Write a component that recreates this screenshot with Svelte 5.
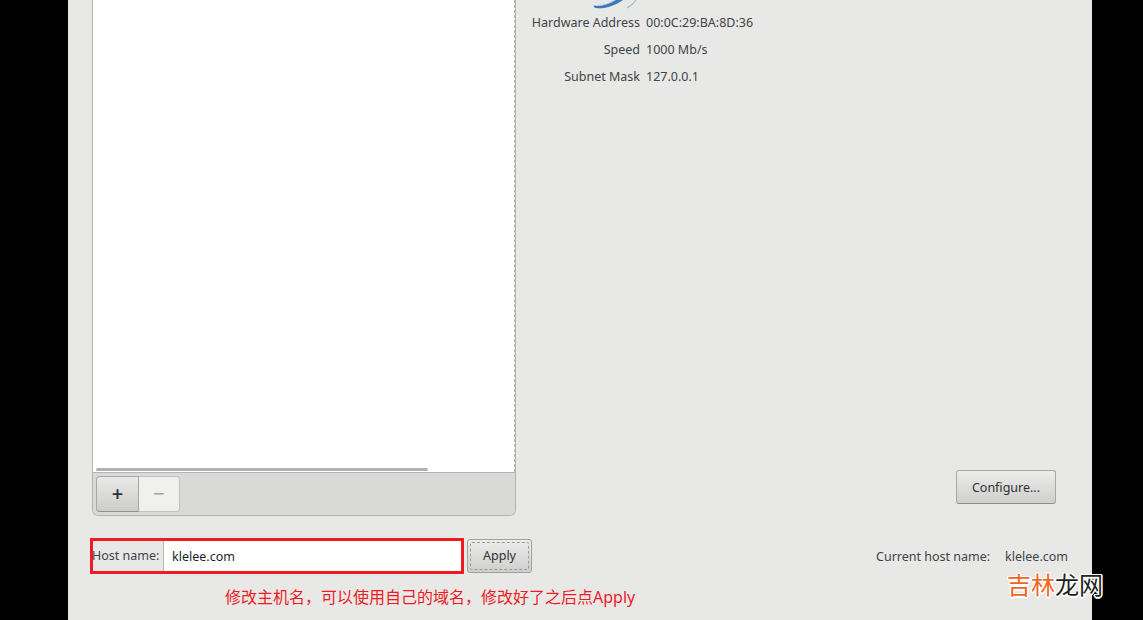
<script>
	const details = [
		{ label: 'Hardware Address', value: '00:0C:29:BA:8D:36' },
		{ label: 'Speed', value: '1000 Mb/s' },
		{ label: 'Subnet Mask', value: '127.0.0.1' },
	];
</script>

<div class="screen">
	<main class="window">
		<div class="top">
			<section class="device-list">
				<div class="list-body">
					<div class="scrollbar"></div>
				</div>
				<div class="toolbar">
					<div class="btn-group">
						<button class="add">+</button>
						<button class="remove">−</button>
					</div>
				</div>
			</section>

			<section class="device-info">
				<svg class="logo" width="50" height="9" viewBox="0 0 50 9">
					<path d="M2 5.5C8 7 16 4.5 24 0L31 0C23 6 11 9.5 4 8C2 7.5 1 6.5 2 5.5Z" fill="#3b78bb" />
					<path d="M6 5.5C12 5.5 18 3 22 0.5" fill="none" stroke="#a9c6e4" stroke-width="1" />
					<path d="M35 8C39 6 42 3 44 0" fill="none" stroke="#9db9d6" stroke-width="1.2" />
				</svg>
				<dl class="details">
					{#each details as row}
						<dt>{row.label}</dt>
						<dd>{row.value}</dd>
					{/each}
				</dl>
				<button class="configure">Configure...</button>
			</section>
		</div>

		<div class="host-row">
			<div class="host-box">
				<label for="hostname">Host name:</label>
				<input id="hostname" value="klelee.com" />
			</div>
			<button class="apply"><span>Apply</span></button>
			<div class="current">
				<span>Current host name:</span>
				<span>klelee.com</span>
			</div>
		</div>

		<p class="note">修改主机名，可以使用自己的域名，修改好了之后点Apply</p>
	</main>

	<div class="watermark"><span class="orange">吉林</span><span>龙网</span></div>
</div>

<style>
	:global(body) {
		margin: 0;
		background: #000;
	}

	.screen {
		position: relative;
		width: 1143px;
		height: 620px;
		overflow: hidden;
		background: #000;
		padding-left: 68px;
		box-sizing: border-box;
		font-family: "Noto Sans", "Noto Sans CJK SC", sans-serif;
		font-size: 12.5px;
		color: #2e3436;
	}

	.window {
		width: 1024px;
		height: 620px;
		background: #e8e8e7;
		box-sizing: border-box;
		padding-left: 24px;
		display: flex;
		flex-direction: column;
	}

	.top {
		display: flex;
		height: 516px;
	}

	.device-list {
		width: 424px;
		box-sizing: border-box;
		border: 1px solid #b4b4b1;
		border-top: 0;
		border-radius: 0 0 6px 6px;
		display: flex;
		flex-direction: column;
		overflow: hidden;
	}

	.list-body {
		flex: 1;
		background: #fff;
		display: flex;
		align-items: flex-end;
		padding: 0 0 1px 3px;
		border-right: 1px dashed #b4b4b1;
	}

	.scrollbar {
		width: 332px;
		height: 3px;
		border-radius: 2px;
		background: #b0b0ae;
	}

	.toolbar {
		height: 43px;
		box-sizing: border-box;
		background: #d9d9d7;
		border-top: 1px solid #b4b4b1;
		padding: 3px;
	}

	.btn-group {
		display: flex;
		width: 84px;
		height: 36px;
	}

	.btn-group button {
		height: 36px;
		padding: 0;
		font-family: inherit;
		font-size: 20px;
		line-height: 1;
	}

	.add {
		width: 43px;
		border: 1px solid #a8a8a5;
		border-bottom-color: #8f8f8c;
		border-radius: 4px 0 0 4px;
		background: linear-gradient(#e9e9e8, #cdcdcb);
		color: #2e3436;
		font-weight: 600;
	}

	.remove {
		width: 41px;
		border: 1px solid #c0c0bd;
		border-left: 0;
		border-radius: 0 4px 4px 0;
		background: #f0f0ef;
		color: #a0a2a2;
	}

	.device-info {
		position: relative;
		flex: 1;
		min-width: 0;
	}

	.logo {
		position: absolute;
		left: 76px;
		top: 0;
	}

	.details {
		margin: 14px 0 0;
		display: grid;
		grid-template-columns: 124px auto;
		column-gap: 6px;
		justify-content: start;
		row-gap: 9px;
		line-height: 18px;
	}

	.details dt {
		text-align: right;
		color: #3f4446;
	}

	.details dd {
		margin: 0;
		color: #3f4446;
	}

	.configure {
		position: absolute;
		left: 440px;
		top: 470px;
		width: 100px;
		height: 34px;
		border: 1px solid #a8a8a5;
		border-bottom-color: #8f8f8c;
		border-radius: 3px;
		background: linear-gradient(#ececeb, #cfcfcd);
		font: inherit;
		color: #2e3436;
		padding: 0;
	}

	.host-row {
		display: flex;
		align-items: center;
		margin: 22px 0 0 -2px;
		height: 36px;
	}

	.host-box {
		width: 374px;
		height: 36px;
		box-sizing: border-box;
		border: 3px solid #ed1c24;
		display: flex;
		align-items: stretch;
		background: #e8e8e7;
	}

	.host-box label {
		width: 71px;
		line-height: 29px;
		margin-left: -1px;
		white-space: nowrap;
		color: #3f4446;
	}

	.host-box input {
		flex: 1;
		min-width: 0;
		border: 0;
		border-left: 1px solid #b4b4b1;
		padding: 0 0 0 8px;
		font: inherit;
		color: #1c1f1f;
		background: #fff;
		outline: none;
	}

	.apply {
		margin-left: 3px;
		width: 65px;
		height: 34px;
		box-sizing: border-box;
		border: 1px solid #a0a09d;
		border-radius: 3px;
		background: linear-gradient(#ececeb, #cfcfcd);
		padding: 2px;
		font: inherit;
		color: #2e3436;
	}

	.apply span {
		display: block;
		line-height: 26px;
		border: 1px dashed #9a9a98;
		border-radius: 2px;
	}

	.current {
		margin-left: auto;
		margin-right: 24px;
		display: flex;
		gap: 15px;
		color: #3f4446;
	}

	.note {
		margin: 12px 0 0 133px;
		font-size: 16px;
		line-height: 22px;
		color: #ed1c24;
		white-space: nowrap;
	}

	.watermark {
		position: absolute;
		left: 1007px;
		top: 570px;
		font-size: 24px;
		line-height: 30px;
		letter-spacing: 0;
		color: #222;
		text-shadow: -1.5px 0 #fff, 1.5px 0 #fff, 0 -1.5px #fff, 0 1.5px #fff, 1px 1px #fff, -1px -1px #fff, 1px -1px #fff, -1px 1px #fff;
	}

	.orange {
		color: #f26522;
	}
</style>
